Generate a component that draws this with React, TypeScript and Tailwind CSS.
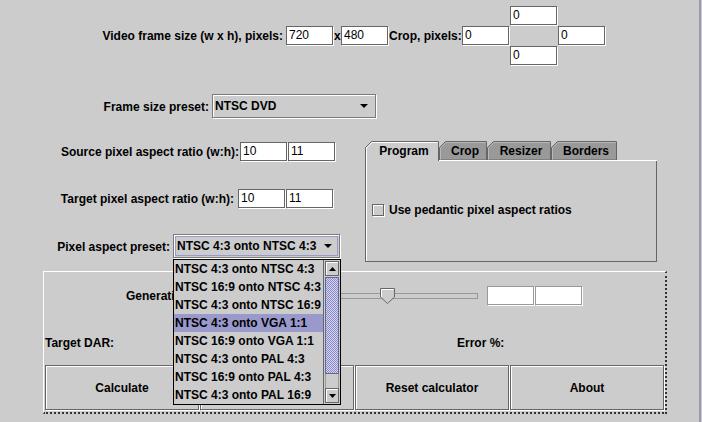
import React from "react";

const FONT = "font-['Liberation_Sans',Arial,Helvetica,sans-serif]";

function Field({ v = "", light = false }: { v?: string; light?: boolean }) {
  return (
    <div className="w-[48px] h-[20px] shrink-0">
      <div
        className={
          light
            ? "w-[47px] h-[19px] border border-[#999999] bg-white shadow-[1px_1px_0_#ffffff] pl-[2px] leading-[17px] font-normal"
            : "w-[47px] h-[19px] border border-[#666666] bg-white shadow-[1px_1px_0_#ffffff] pl-[2px] leading-[17px] font-normal"
        }
      >
        {v}
      </div>
    </div>
  );
}

function Arrow() {
  return (
    <svg width="8" height="4" className="shrink-0 mr-[7px]">
      <path d="M0 0 H8 L4 4 Z" fill="#000" />
    </svg>
  );
}

function Tab({
  label,
  w,
  selected,
  className,
}: {
  label: string;
  w: number;
  selected?: boolean;
  className: string;
}) {
  const h = 20;
  return (
    <div className={`relative h-[20px] shrink-0 ${className}`}>
      <svg width={w} height={h} className="absolute left-0 top-0">
        {selected ? (
          <>
            <path d={`M0.5 ${h} V6.5 L6.5 0.5 H${w - 0.5} V${h}`} fill="#cccccc" stroke="#666666" />
            <path d={`M1.5 ${h} V7 L7 1.5 H${w - 1.5}`} fill="none" stroke="#ffffff" />
          </>
        ) : (
          <>
            <path d={`M0.5 19 V6.5 L6.5 0.5 H${w - 0.5} V19 Z`} fill="#999999" stroke="#666666" />
            <path d={`M1.5 18.5 V7 L7 1.5 H${w - 1.5}`} fill="none" stroke="#b8b8b8" />
            <path d={`M0 19.5 H${w}`} stroke="#ffffff" />
          </>
        )}
      </svg>
      <div className="relative h-[19px] flex items-center justify-center pl-[4px] font-bold whitespace-nowrap">
        {label}
      </div>
    </div>
  );
}

const items = [
  "NTSC 4:3 onto NTSC 4:3",
  "NTSC 16:9 onto NTSC 4:3",
  "NTSC 4:3 onto NTSC 16:9",
  "NTSC 4:3 onto VGA 1:1",
  "NTSC 16:9 onto VGA 1:1",
  "NTSC 4:3 onto PAL 4:3",
  "NTSC 16:9 onto PAL 4:3",
  "NTSC 4:3 onto PAL 16:9",
];

function Button({ label }: { label: string }) {
  return (
    <div className="h-[46px]">
      <div className="w-[154px] h-[45px] border border-[#666666] shadow-[inset_1px_1px_0_#ffffff,1px_1px_0_#ffffff] flex items-center justify-center font-bold whitespace-nowrap">
        {label}
      </div>
    </div>
  );
}

export default function App() {
  return (
    <div
      className={`${FONT} w-[702px] h-[422px] bg-[#cccccc] text-black text-[12px] leading-[14px] flex overflow-hidden select-none`}
    >
      <div className="relative w-[699px] h-full flex flex-col">
        {/* Row 1: frame size + crop */}
        <div className="flex pt-[6px] h-[66px] shrink-0">
          <div className="flex items-center mt-[20px] h-[20px]">
            <div className="w-[286px] pr-[3px] text-right font-bold whitespace-nowrap">
              Video frame size (w x h), pixels:
            </div>
            <Field v="720" />
            <div className="w-[7px] font-bold">x</div>
            <Field v="480" />
            <div className="w-[73px] pr-[2px] text-right font-bold whitespace-nowrap">Crop, pixels:</div>
          </div>
          <div className="grid grid-cols-[48px_48px_48px] grid-rows-[20px_20px_20px]">
            <div />
            <Field v="0" />
            <div />
            <Field v="0" />
            <div />
            <Field v="0" />
            <div />
            <Field v="0" />
            <div />
          </div>
        </div>

        {/* Row 2: frame size preset */}
        <div className="flex items-center mt-[28px] h-[25px] shrink-0">
          <div className="w-[212px] pr-[3px] text-right font-bold whitespace-nowrap">Frame size preset:</div>
          <div className="w-[165px] h-[25px]">
            <div className="w-[164px] h-[24px] border border-[#7a7a7a] shadow-[inset_1px_1px_0_#ffffff,1px_1px_0_#ffffff] flex items-center pl-[2px] font-bold">
              <div className="flex-1 whitespace-nowrap">NTSC DVD</div>
              <Arrow />
            </div>
          </div>
        </div>

        {/* Middle section */}
        <div className="flex mt-[22px] h-[121px] shrink-0">
          <div className="w-[365px] flex flex-col">
            <div className="flex items-center mt-[1px] h-[20px]">
              <div className="w-[240px] pr-[1px] text-right font-bold whitespace-nowrap">
                Source pixel aspect ratio (w:h):
              </div>
              <Field v="10" />
              <Field v="11" />
            </div>
            <div className="flex items-center mt-[27px] h-[20px]">
              <div className="w-[238px] pr-[4px] text-right font-bold whitespace-nowrap">
                Target pixel aspect ratio (w:h):
              </div>
              <Field v="10" />
              <Field v="11" />
            </div>
            <div className="flex items-center mt-[25px] h-[25px]">
              <div className="w-[173px] pr-[3px] text-right font-bold whitespace-nowrap">Pixel aspect preset:</div>
              <div className="w-[168px] h-[25px]">
                <div className="relative w-[167px] h-[24px] border border-[#7a7a7a] shadow-[inset_1px_1px_0_#ffffff,1px_1px_0_#ffffff] flex items-center pl-[3px] font-bold">
                  <div className="absolute inset-[1px] border border-[#9999cc]" />
                  <div className="relative flex-1 whitespace-nowrap">NTSC 4:3 onto NTSC 4:3</div>
                  <Arrow />
                </div>
              </div>
            </div>
          </div>

          {/* Tabbed pane */}
          <div className="w-[292px] h-[121px] flex flex-col">
            <div className="flex h-[20px]">
              <Tab label="Program" w={74} selected className="w-[74px]" />
              <Tab label="Crop" w={48} className="w-[48px]" />
              <Tab label="Resizer" w={64} className="w-[64px]" />
              <Tab label="Borders" w={66} className="w-[66px]" />
              <div className="flex-1 h-[20px] border-b border-white" />
            </div>
            <div className="h-[101px] border-l border-r border-b border-[#666666] shadow-[inset_1px_0_0_#ffffff] pl-[6px] pt-[42px]">
              <div className="flex items-center gap-[4px] h-[14px]">
                <div className="w-[13px] h-[13px] shrink-0">
                  <div className="w-[12px] h-[12px] border border-[#666666] shadow-[inset_1px_1px_0_#ffffff,1px_1px_0_#ffffff]" />
                </div>
                <div className="font-bold whitespace-nowrap">Use pedantic pixel aspect ratios</div>
              </div>
            </div>
          </div>
        </div>

        {/* Bottom panel */}
        <div className="ml-[43px] mt-[9px] w-[624px] h-[143px] shrink-0 border-t border-l border-r-2 border-b-2 border-dotted [border-top-style:solid] [border-left-style:solid] border-t-white border-l-white border-r-[#333333] border-b-[#333333] flex flex-col">
          <div className="flex items-center mt-[14px] h-[20px] ml-[82px]">
            <div className="w-[47px] overflow-hidden font-bold whitespace-nowrap">Generation accuracy:</div>
            <div className="w-[77px]" />
            <div className="relative w-[230px] h-[20px]">
              <div className="absolute left-0 right-[2px] top-[7px] h-[6px] border border-[#999999] bg-[#cccccc]" />
              <svg width="16" height="17" className="absolute left-[130px] top-[2px]">
                <path d="M0.5 0.5 H14.5 V9 L7.5 15.5 L0.5 9 Z" fill="#cccccc" stroke="#666666" />
                <path d="M1.5 9 V1.5 H13.5" fill="none" stroke="#ffffff" />
              </svg>
            </div>
            <div className="ml-[7px] flex">
              <Field light />
              <Field light />
            </div>
          </div>
          <div className="flex items-center mt-[30px] h-[14px] ml-[1px]">
            <div className="w-[412px] font-bold">Target DAR:</div>
            <div className="font-bold">Error %:</div>
          </div>
          <div className="grid grid-cols-[155px_155px_155px_155px] mt-[15px] ml-[1px] h-[46px]">
            <Button label="Calculate" />
            <Button label="" />
            <Button label="Reset calculator" />
            <Button label="About" />
          </div>
        </div>

        {/* Popup list (overlay) */}
        <div className="absolute left-[173px] top-[259px] w-[168px] h-[146px] border border-black bg-[#cccccc] flex z-10">
          <div className="flex-1 flex flex-col overflow-hidden">
            {items.map((t, i) => (
              <div
                key={t}
                className={
                  i === 3
                    ? "h-[18px] leading-[18px] pl-[1px] font-bold whitespace-nowrap bg-[#9999cc]"
                    : "h-[18px] leading-[18px] pl-[1px] font-bold whitespace-nowrap"
                }
              >
                {t}
              </div>
            ))}
          </div>
          <div className="w-[17px] h-full flex flex-col border-l border-[#666666] pl-[1px] pr-[1px] py-[1px]">
            <div className="h-[15px] border border-[#666666] shadow-[inset_1px_1px_0_#ffffff] flex items-center justify-center">
              <svg width="7" height="4">
                <path d="M3.5 0 L7 4 H0 Z" fill="#000" />
              </svg>
            </div>
            <div className="mt-[1px] h-[97px] border border-[#666699] bg-[#9999cc] bg-[conic-gradient(#d4d4f4_25%,#8c8cc4_0_50%,#d4d4f4_0_75%,#8c8cc4_0)] bg-[length:2px_2px]" />
            <div className="flex-1 border-l border-r border-[#999999]" />
            <div className="h-[15px] border border-[#666666] shadow-[inset_1px_1px_0_#ffffff] flex items-center justify-center">
              <svg width="7" height="4">
                <path d="M0 0 H7 L3.5 4 Z" fill="#000" />
              </svg>
            </div>
          </div>
        </div>
      </div>
      <div className="w-[2px] h-full bg-[#9a9ab2]" />
      <div className="w-[1px] h-full" />
    </div>
  );
}
